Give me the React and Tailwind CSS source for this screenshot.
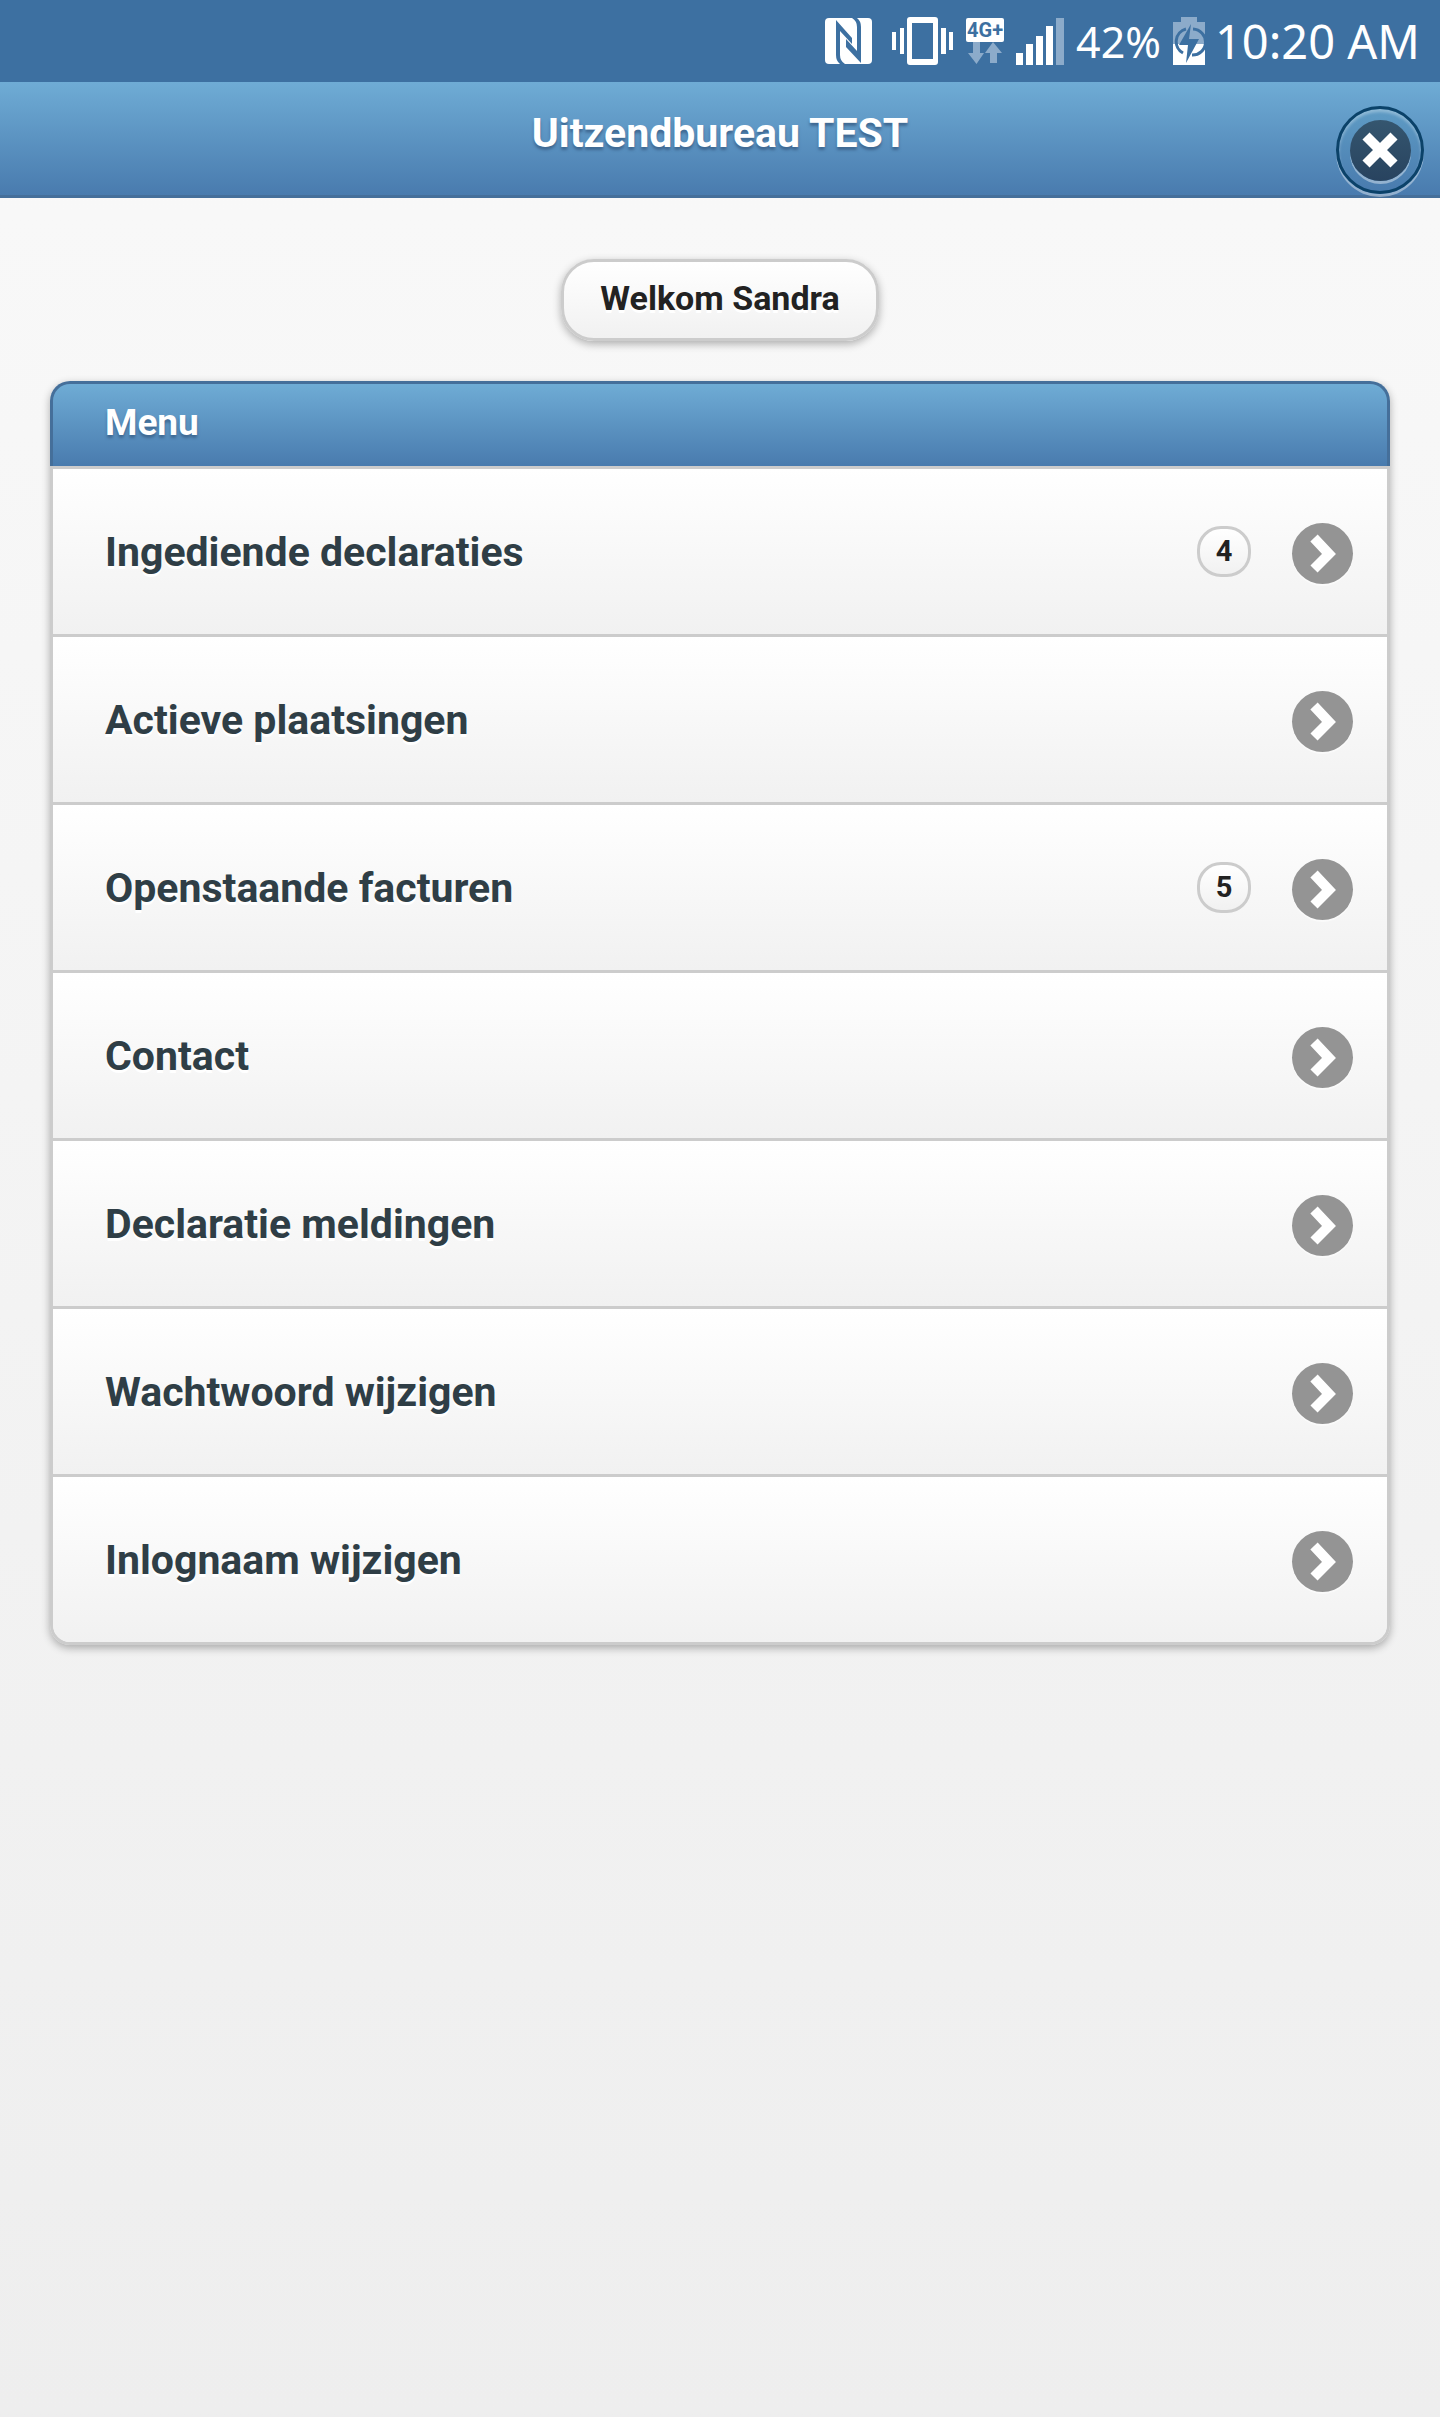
import React from 'react';

const menuItems = [
  { label: 'Ingediende declaraties', count: 4 },
  { label: 'Actieve plaatsingen' },
  { label: 'Openstaande facturen', count: 5 },
  { label: 'Contact' },
  { label: 'Declaratie meldingen' },
  { label: 'Wachtwoord wijzigen' },
  { label: 'Inlognaam wijzigen' },
];

const NfcIcon = () => (
  <svg width="47" height="46" viewBox="0 0 47 46" aria-hidden="true">
    <rect width="47" height="46" rx="4" fill="#fff" />
    <g fill="#3d70a1">
      <path d="M11 2L27 20V26L15 13V37Q15 43 20 46H15Q11 43 11 37Z" />
      <path d="M36 45L21 29V21L32 33V9Q32 3 27 0H32Q36 3 36 9Z" />
    </g>
  </svg>
);

const VibrateIcon = () => (
  <svg width="62" height="48" viewBox="0 0 62 48" fill="#fff" aria-hidden="true">
    <rect y="15" width="4" height="18" />
    <rect x="8" y="11" width="4" height="26" />
    <path fillRule="evenodd" d="M18 0H43Q46 0 46 3V45Q46 48 43 48H18Q15 48 15 45V3Q15 0 18 0ZM20 6V42H41V6Z" />
    <rect x="49" y="11" width="5" height="26" />
    <rect x="57" y="15" width="4" height="18" />
  </svg>
);

const NetworkIcon = () => (
  <div className="flex w-[38px] flex-col items-center">
    <span className="flex h-6 w-full items-center justify-center rounded-xs bg-white text-[20px] leading-none font-bold text-[#3d70a1] font-[Roboto,sans-serif]">
      4G+
    </span>
    <svg width="38" height="22" viewBox="0 0 38 22" fill="#8cabca" aria-hidden="true">
      <path d="M7 0H14V11H18L10.500 22L2 11H7Z" />
      <path d="M27 0L36 11H31V21H24V11H19Z" />
    </svg>
  </div>
);

const SignalIcon = () => (
  <svg width="48" height="47" viewBox="0 0 48 47" fill="#fff" aria-hidden="true">
    <rect y="35" width="7" height="12" />
    <rect x="10" y="26" width="7" height="21" />
    <rect x="20" y="18" width="7" height="29" />
    <rect x="30" y="8" width="7" height="39" />
    <rect x="40" width="8" height="47" fill="#8cabca" />
  </svg>
);

const BatteryIcon = () => (
  <svg width="32" height="48" viewBox="0 0 32 48" aria-hidden="true">
    <path d="M8 0H24V5H32V27H0V5H8Z" fill="#8cabca" />
    <rect y="27" width="32" height="21" fill="#fff" />
    <path d="M13 12A13 13 0 0 0 10 36M20 12A13 13 0 0 1 19 38" fill="none" stroke="#3d70a1" strokeWidth="3" />
    <path d="M18 7L6 28H15L13 46L26 22H16Z" fill="#3d70a1" />
  </svg>
);

const CloseIcon = () => (
  <svg width="36" height="36" viewBox="0 0 36 36" fill="none" stroke="#fff" strokeWidth="10" aria-hidden="true">
    <path d="M4 4L32 32M32 4L4 32" />
  </svg>
);

const ArrowIcon = () => (
  <span className="flex size-[61px] shrink-0 items-center justify-center rounded-full bg-[#949494] shadow-[0_2px_0_rgba(255,255,255,0.5)]">
    <svg width="61" height="61" viewBox="0 0 61 61" fill="none" stroke="#fff" strokeWidth="10" aria-hidden="true">
      <path d="M22 15L37 31L22 46" />
    </svg>
  </span>
);

const App = () => {
  return (
    <div className="min-h-screen bg-linear-to-b from-[#f9f9f9] to-[#eee] font-[Roboto,sans-serif] font-bold">
      {/* Status bar */}
      <div className="flex h-[82px] items-center justify-end bg-[#3d70a1] pr-5 font-['Noto_Sans',sans-serif] font-normal text-white">
        <div className="flex items-center">
          <NfcIcon />
          <div className="ml-5"><VibrateIcon /></div>
          <div className="ml-3"><NetworkIcon /></div>
          <div className="ml-3"><SignalIcon /></div>
        </div>
        <span className="ml-3 text-[43px] leading-none">42%</span>
        <div className="ml-3"><BatteryIcon /></div>
        <span className="ml-2.5 text-[47px] leading-none">10:20 AM</span>
      </div>

      {/* Header */}
      <header className="grid h-[116px] grid-cols-[1fr_auto_1fr] border-b-3 border-[#456f9a] bg-linear-to-b from-[#6facd5] to-[#497bae]">
        <h1 className="col-start-2 pt-[26px] text-[41px] leading-[50px] text-white [text-shadow:0_3px_3px_#3e6790]">
          Uitzendbureau TEST
        </h1>
        <button
          type="button"
          aria-label="Sluiten"
          className="mt-6 mr-4 flex size-[88px] items-center justify-center justify-self-end rounded-full border-[3px] border-[#0b4269] bg-linear-to-b from-[#5f9cc5] to-[#497bae] shadow-[0_3px_0_rgba(255,255,255,0.4),inset_0_3px_3px_rgba(255,255,255,0.3)]"
        >
          <span className="flex size-[61px] items-center justify-center rounded-full bg-linear-to-b from-[#35566f] to-[#28435f] shadow-[0_3px_0_rgba(255,255,255,0.4)]">
            <CloseIcon />
          </span>
        </button>
      </header>

      <main className="px-[50px] pt-[61px] pb-12">
        <div className="flex justify-center">
          <button
            type="button"
            className="h-[82px] rounded-[33px] border-3 border-[#ccc] bg-linear-to-b from-white to-[#f1f1f1] px-9 pb-1 text-[34px] leading-10 text-[#222] shadow-[0_3px_9px_rgba(0,0,0,0.3)] [text-shadow:0_3px_0_#fff]"
          >
            Welkom Sandra
          </button>
        </div>

        {/* Menu */}
        <section className="mt-10 rounded-[20px] shadow-[0_3px_9px_rgba(0,0,0,0.3)]">
          <h2 className="h-[85px] rounded-t-[20px] border-3 border-b-0 border-[#456f9a] bg-linear-to-b from-[#6facd5] to-[#497bae] px-[52px] pt-4 text-[37px] leading-[46px] text-white [text-shadow:0_3px_3px_#3e6790]">
            Menu
          </h2>
          <ul className="overflow-hidden rounded-b-[20px] border-3 border-[#ccc]">
            {menuItems.map((item) => (
              <li key={item.label} className="border-b-3 border-[#ccc] last:border-b-0">
                <a
                  href="#"
                  className="flex h-[165px] items-center bg-linear-to-b from-white to-[#f1f1f1] pr-[34px] pl-[52px] text-[#2f3e46]"
                >
                  <span className="flex-1 text-[41px] leading-[50px] [text-shadow:0_3px_0_#fff]">
                    {item.label}
                  </span>
                  {item.count && (
                    <span className="mr-[41px] flex h-[51px] w-[54px] items-center justify-center rounded-3xl border-3 border-[#ccc] bg-linear-to-b from-white to-[#f1f1f1] text-[29px] leading-none text-[#222]">
                      {item.count}
                    </span>
                  )}
                  <span className="pt-1">
                    <ArrowIcon />
                  </span>
                </a>
              </li>
            ))}
          </ul>
        </section>
      </main>
    </div>
  );
};

export default App;
